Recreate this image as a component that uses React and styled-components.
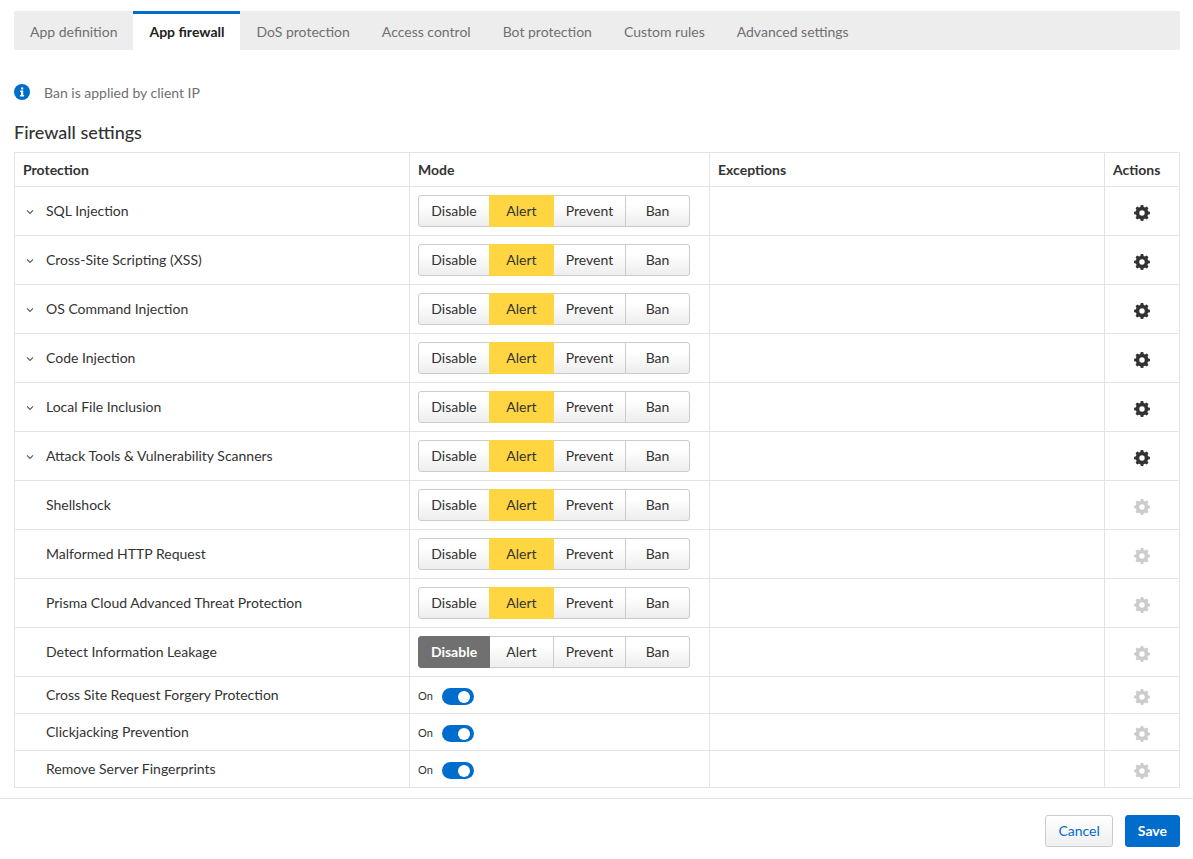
import React, { useState } from 'react'
import styled, { createGlobalStyle, css } from 'styled-components'

const GlobalStyle = createGlobalStyle`
*{
box-sizing:border-box;
}
body{
margin:0;
background-color:#fff;
color:#333;
font-family:Lato, "Liberation Sans", sans-serif;
font-size:14px;
line-height:20px;
}
button, input{
font:inherit;
}
`
const Page = styled.div`
display:flex;
flex-direction:column;
padding-top:11px;
`
const Content = styled.main`
padding:0 13px 10px 14px;
`
const Tabs = styled.nav`
display:flex;
background-color:#ededed;
border-radius:2px;
`
const Tab = styled.button`
height:39px;
padding:0 16px;
border:0;
border-top:3px solid transparent;
background:transparent;
color:#707070;
cursor:pointer;

${({ $active }) => $active && css`
border-top-color:#006dcc;
background:#fff;
color:#222;
font-weight:bold;
`}
`
const Notice = styled.div`
display:flex;
align-items:flex-start;
gap:14px;
margin-top:33px;
line-height:20px;
color:#707070;

svg{
margin-top:1px;
}
`
const Title = styled.h2`
margin:17px 0 8px;
font-size:18px;
line-height:24px;
font-weight:500;
`
const Table = styled.table`
width:100%;
table-layout:fixed;
border-collapse:separate;
border-spacing:0;
border:1px solid #e4e4e4;
border-width:1px 0 0 1px;
`
const Col = styled.col`
width:${({ $width }) => $width};
`
const Th = styled.th`
height:34px;
padding:0 8px;
border:1px solid #e4e4e4;
border-width:0 1px 1px 0;
text-align:left;
font-weight:bold;
`
const Row = styled.tr`
height:${({ $compact }) => $compact ? "37px" : "49px"};
`
const Td = styled.td`
padding:0 8px;
border:1px solid #e4e4e4;
border-width:0 1px 1px 0;
`
const Name = styled.div`
display:flex;
align-items:center;
`
const Expand = styled.button`
display:flex;
align-items:flex-end;
justify-content:center;
width:14px;
height:12px;
margin-right:9px;
padding:0 0 2px;
border:0;
background:none;
color:#555;
cursor:pointer;
visibility:${({ $hidden }) => $hidden ? "hidden" : "visible"};
`
const Segments = styled.div`
display:grid;
grid-template-columns:71px 64px 72px 64px;
`
const selectedColors = {
    Disable: "#707070",
    Alert: "#ffd642",
    Prevent: "#f58220",
    Ban: "#c9302c",
}
const Segment = styled.button`
height:32px;
margin-right:-1px;
padding:0;
border:1px solid #ccc;
background:linear-gradient(#fff 30%, #ededed);
color:#333;
cursor:pointer;

&:first-child{
border-radius:3px 0 0 3px;
}
&:last-child{
border-radius:0 3px 3px 0;
}

${({ $selected, $mode }) => $selected && css`
z-index:1;
border-color:${selectedColors[$mode]};
background:${selectedColors[$mode]};
color:${$mode === "Alert" ? "#333" : "#fff"};
font-weight:${$mode === "Alert" ? "normal" : "bold"};
`}
`
const SwitchLabel = styled.label`
display:inline-flex;
align-items:center;
gap:9px;
font-size:11px;
`
const Switch = styled.input`
appearance:none;
display:flex;
align-items:center;
width:32px;
height:17px;
margin:2px 0 0;
padding:0 4px;
border-radius:9px;
background-color:#bbb;
cursor:pointer;

&::before{
content:"";
width:12px;
height:12px;
border-radius:50%;
background-color:#fff;
}
&:checked{
justify-content:flex-end;
background-color:#006dcc;
}
`
const GearButton = styled.button`
display:block;
width:16px;
height:16px;
margin:4px auto 0;
padding:0;
border:0;
background:none;
color:#333;

&:disabled{
color:#ccc;
}
`
const Footer = styled.footer`
display:flex;
justify-content:flex-end;
gap:12px;
padding:16px 13px 12px;
border-top:1px solid #e4e4e4;
`
const FooterButton = styled.button`
height:32px;
padding:0 12px;
border:1px solid ${({ $primary }) => $primary ? "#006dcc" : "#ccc"};
border-radius:3px;
background:${({ $primary }) => $primary ? "#006dcc" : "linear-gradient(#fff, #f0f0f0)"};
color:${({ $primary }) => $primary ? "#fff" : "#006dcc"};
font-weight:${({ $primary }) => $primary ? "bold" : "normal"};
cursor:pointer;
`

const InfoIcon = () => (
    <svg width="16" height="16" viewBox="0 0 16 16" aria-hidden="true">
        <circle cx="8" cy="8" r="8" fill="#006dcc" />
        <path fill="#fff" d="M7 3.5h2.2v2H7zM6.1 6.5h3.1v4.4h.9v1.5h-4v-1.5H7V8h-.9z" />
    </svg>
)

const ChevronIcon = () => (
    <svg width="8" height="6" viewBox="0 0 8 6" aria-hidden="true">
        <path d="M1 1.4 4 4.4 7 1.4" fill="none" stroke="currentColor" strokeWidth="1.1" />
    </svg>
)

const GearIcon = () => (
    <svg width="16" height="16" viewBox="0 0 16 16" fill="none" stroke="currentColor" aria-hidden="true">
        <circle cx="8" cy="8" r="4.5" strokeWidth="3.6" />
        {[0, 45, 90, 135].map((angle) => (
            <g key={angle} transform={`rotate(${angle} 8 8)`} fill="currentColor" stroke="none">
                <rect x="6.4" y="0" width="3.2" height="3.4" rx="1.1" />
                <rect x="6.4" y="12.6" width="3.2" height="3.4" rx="1.1" />
            </g>
        ))}
    </svg>
)

const tabs = [
    "App definition",
    "App firewall",
    "DoS protection",
    "Access control",
    "Bot protection",
    "Custom rules",
    "Advanced settings",
]

const modes = ["Disable", "Alert", "Prevent", "Ban"]

const protections = [
    { name: "SQL Injection", mode: "Alert", expandable: true },
    { name: "Cross-Site Scripting (XSS)", mode: "Alert", expandable: true },
    { name: "OS Command Injection", mode: "Alert", expandable: true },
    { name: "Code Injection", mode: "Alert", expandable: true },
    { name: "Local File Inclusion", mode: "Alert", expandable: true },
    { name: "Attack Tools & Vulnerability Scanners", mode: "Alert", expandable: true },
    { name: "Shellshock", mode: "Alert" },
    { name: "Malformed HTTP Request", mode: "Alert" },
    { name: "Prisma Cloud Advanced Threat Protection", mode: "Alert" },
    { name: "Detect Information Leakage", mode: "Disable" },
    { name: "Cross Site Request Forgery Protection", toggle: true },
    { name: "Clickjacking Prevention", toggle: true },
    { name: "Remove Server Fingerprints", toggle: true },
]

const ModePicker = ({ initial, name }) => {
    const [mode, setMode] = useState(initial)
    return (
        <Segments role="group" aria-label={name}>
            {modes.map((item) => (
                <Segment
                    key={item}
                    type="button"
                    $mode={item}
                    $selected={item === mode}
                    aria-pressed={item === mode}
                    onClick={() => setMode(item)}
                >
                    {item}
                </Segment>
            ))}
        </Segments>
    )
}

const Toggle = () => {
    const [on, setOn] = useState(true)
    return (
        <SwitchLabel>
            {on ? "On" : "Off"}
            <Switch type="checkbox" checked={on} onChange={() => setOn(!on)} />
        </SwitchLabel>
    )
}

const ProtectionRow = ({ item }) => (
    <Row $compact={item.toggle}>
        <Td>
            <Name>
                <Expand type="button" $hidden={!item.expandable} aria-label={`Expand ${item.name}`}>
                    <ChevronIcon />
                </Expand>
                {item.name}
            </Name>
        </Td>
        <Td>
            {item.toggle ? <Toggle /> : <ModePicker initial={item.mode} name={item.name} />}
        </Td>
        <Td />
        <Td>
            <GearButton type="button" disabled={!item.expandable} aria-label={`Configure ${item.name}`}>
                <GearIcon />
            </GearButton>
        </Td>
    </Row>
)

const App = () => {
    const [activeTab, setActiveTab] = useState("App firewall")
    return (
        <Page>
            <GlobalStyle />
            <Content>
                <Tabs>
                    {tabs.map((tab) => (
                        <Tab key={tab} type="button" $active={tab === activeTab} onClick={() => setActiveTab(tab)}>
                            {tab}
                        </Tab>
                    ))}
                </Tabs>
                <Notice>
                    <InfoIcon />
                    Ban is applied by client IP
                </Notice>
                <Title>Firewall settings</Title>
                <Table>
                    <colgroup>
                        <Col />
                        <Col $width="300px" />
                        <Col />
                        <Col $width="75px" />
                    </colgroup>
                    <thead>
                        <tr>
                            <Th>Protection</Th>
                            <Th>Mode</Th>
                            <Th>Exceptions</Th>
                            <Th>Actions</Th>
                        </tr>
                    </thead>
                    <tbody>
                        {protections.map((item) => (
                            <ProtectionRow key={item.name} item={item} />
                        ))}
                    </tbody>
                </Table>
            </Content>
            <Footer>
                <FooterButton type="button">Cancel</FooterButton>
                <FooterButton type="button" $primary>Save</FooterButton>
            </Footer>
        </Page>
    )
}

export default App
